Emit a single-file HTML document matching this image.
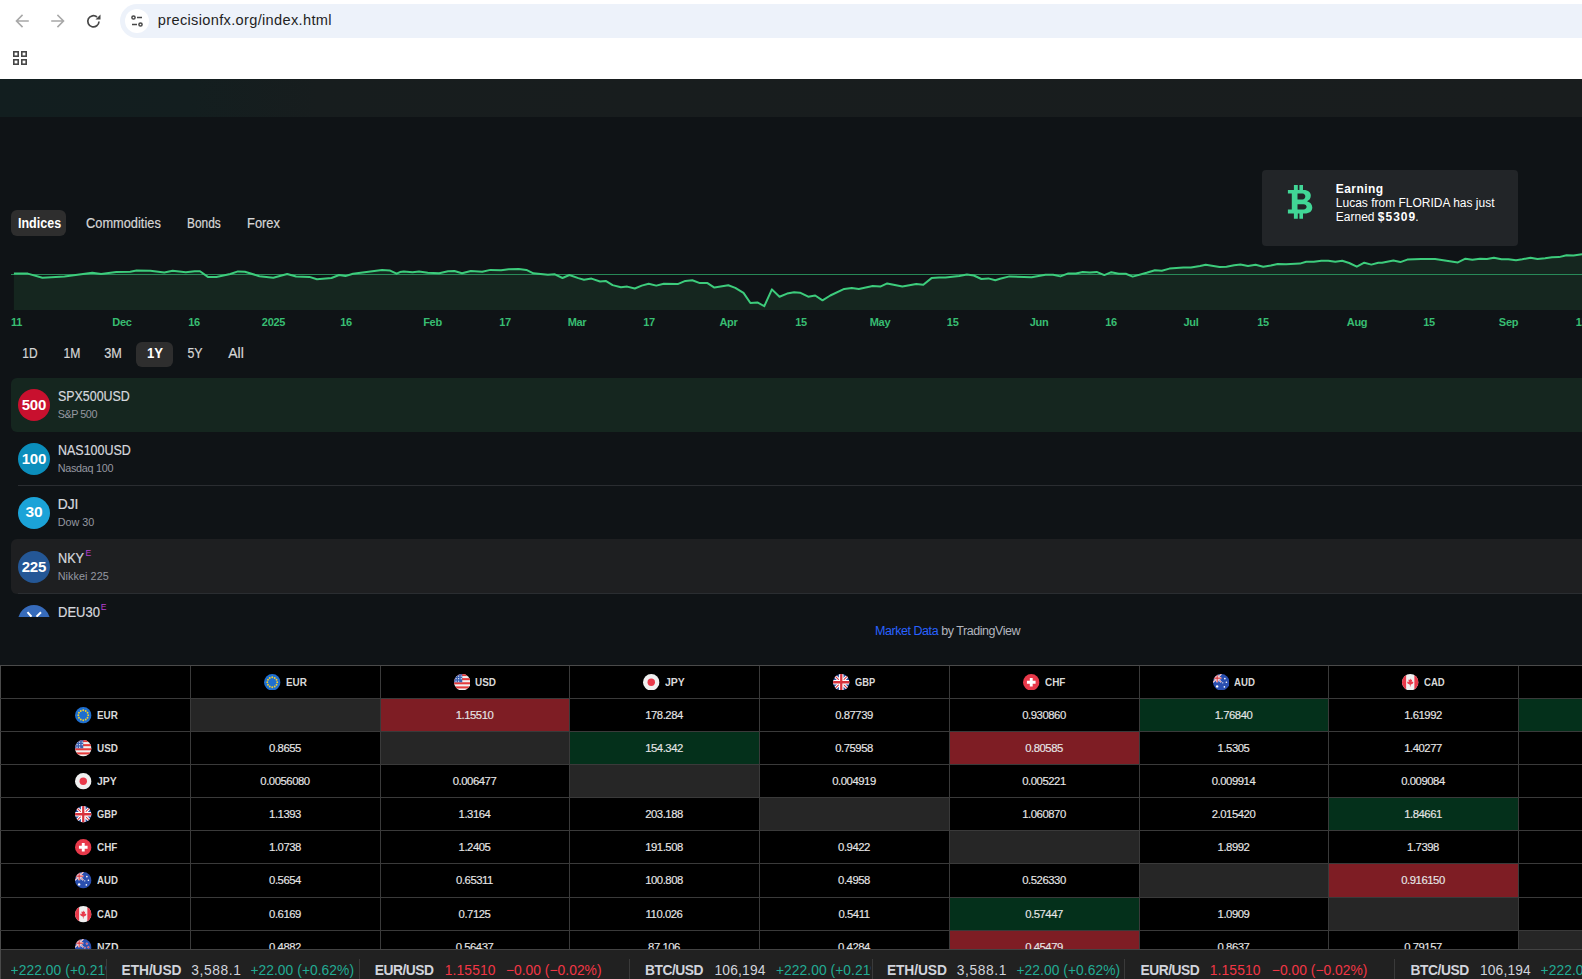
<!DOCTYPE html>
<html><head><meta charset="utf-8">
<style>
*{box-sizing:border-box;margin:0;padding:0}
html,body{width:1582px;height:979px;overflow:hidden;background:#0f1316;font-family:"Liberation Sans",sans-serif}
.abs{position:absolute}
#chrome{position:absolute;left:0;top:0;width:1582px;height:79px;background:#fff;overflow:hidden}
#page{position:absolute;left:0;top:79px;width:1582px;height:900px;background:#0f1316;overflow:hidden}
.t{position:absolute;white-space:pre;line-height:1}
</style></head><body>
<div id="chrome">
  <svg class="abs" style="left:0;top:0" width="120" height="79" viewBox="0 0 120 79">
    <g fill="none" stroke="#a8a8a8" stroke-width="1.6" stroke-linecap="square">
      <path d="M28 21H17M22 15.5L16.5 21L22 26.5"/>
      <path d="M52 21H63M58 15.5L63.5 21L58 26.5"/>
    </g>
    <g fill="none" stroke="#474747" stroke-width="1.7">
      <path d="M99 21.5A5.6 5.6 0 1 1 97 17"/>
    </g>
    <path d="M100.5 14.5V19.5H95.5Z" fill="#474747"/>
    <g fill="none" stroke="#474747" stroke-width="1.6">
      <rect x="13.8" y="51.8" width="4.4" height="4.4"/>
      <rect x="21.8" y="51.8" width="4.4" height="4.4"/>
      <rect x="13.8" y="59.8" width="4.4" height="4.4"/>
      <rect x="21.8" y="59.8" width="4.4" height="4.4"/>
    </g>
  </svg>
  <div class="abs" style="left:120px;top:4px;width:1500px;height:34px;border-radius:17px;background:#edf2fa"></div>
  <div class="abs" style="left:125px;top:9px;width:24px;height:24px;border-radius:12px;background:#fff"></div>
  <svg class="abs" style="left:125px;top:9px" width="24" height="24" viewBox="0 0 24 24">
    <g fill="none" stroke="#474747" stroke-width="1.5">
      <circle cx="8.5" cy="8.5" r="1.6"/><path d="M12 8.5H17"/>
      <circle cx="15.5" cy="15.5" r="1.6"/><path d="M7 15.5H12"/>
    </g>
  </svg>
  <div class="t" style="left:157.8px;top:13.1px;font-size:14.6px;letter-spacing:0.33px;color:#1f1f1f">precisionfx.org/index.html</div>
</div>
<div id="page">
<div class="abs" style="left:0;top:0;width:1582px;height:38px;background:linear-gradient(90deg,#121e1f 0%,#131e1f 12%,#171d1e 20%,#181d1e 40%,#191d1e 100%)"></div>
<div class="abs" style="left:11px;top:131px;width:55px;height:26px;border-radius:6px;background:#2e2e2e"></div>
<div class="t" style="left:17.7px;top:137.7px;font-size:13.8px;font-weight:700;color:#fff;letter-spacing:0px;transform:scaleX(0.907);transform-origin:0 0;">Indices</div>
<div class="t" style="left:85.6px;top:137.7px;font-size:13.8px;font-weight:400;color:#d6d6d6;letter-spacing:0px;transform:scaleX(0.929);transform-origin:0 0;-webkit-text-stroke:0.2px #d6d6d6">Commodities</div>
<div class="t" style="left:186.6px;top:137.7px;font-size:13.8px;font-weight:400;color:#d6d6d6;letter-spacing:0px;transform:scaleX(0.863);transform-origin:0 0;-webkit-text-stroke:0.2px #d6d6d6">Bonds</div>
<div class="t" style="left:246.7px;top:137.7px;font-size:13.8px;font-weight:400;color:#d6d6d6;letter-spacing:0px;transform:scaleX(0.935);transform-origin:0 0;-webkit-text-stroke:0.2px #d6d6d6">Forex</div>
<div class="abs" style="left:1262px;top:91px;width:256px;height:76px;border-radius:4px;background:#222528"></div>
<svg class="abs" style="left:1280px;top:101px" width="40" height="45" viewBox="1280 180 40 45"><path fill="#41d696" fill-rule="evenodd" d="M1287.9 190L1303.5 190C1308.5 190 1310.8 192.5 1310.8 195.8C1310.8 198.5 1309.3 200.3 1307 201.2C1310.3 202 1312.3 204.5 1312.3 207.5C1312.3 211.2 1309.5 213.5 1304.5 213.5L1287.9 213.5L1287.9 209.4L1291.8 209.4L1291.8 193.4L1287.9 193.4Z M1297.5 193.6H1302.5C1304.3 193.6 1305.3 195 1305.3 196.5C1305.3 198 1304.3 199.4 1302.5 199.4H1297.5Z M1297.5 204.2H1303.5C1305.6 204.2 1306.6 205.5 1306.6 206.8C1306.6 208.1 1305.6 209.4 1303.5 209.4H1297.5Z"/><path fill="#41d696" d="M1293.9 185H1297.8V191H1293.9Z M1299.4 185H1303V191H1299.4Z M1293.9 212.5H1297.8V218.8H1293.9Z M1299.4 212.5H1303V218.8H1299.4Z"/></svg>
<div class="t" style="left:1335.8px;top:103.6px;font-size:12px;font-weight:700;color:#fff;letter-spacing:0.45px;">Earning</div>
<div class="t" style="left:1335.8px;top:117.9px;font-size:12px;font-weight:400;color:#fff;letter-spacing:0px;">Lucas from FLORIDA has just</div>
<div class="t" style="left:1335.8px;top:131.9px;font-size:12px;font-weight:400;color:#fff;letter-spacing:0px;">Earned <b style='letter-spacing:1px'>$530</b><b>9</b>.</div>
<svg class="abs" style="left:0;top:166px" width="1582" height="70" viewBox="0 245 1582 70">
<path d="M13.9 273.6 L27.8 273.6 L42.4 277.8 L64.5 276.5 L92.3 272.7 L101.1 274.0 L116.3 272.1 L130.2 271.7 L136.5 270.6 L150.4 270.8 L164.3 272.4 L172.6 270.8 L185.8 272.3 L194.7 271.2 L200.0 271.2 L208.2 277.1 L216.4 277.1 L230.3 274.0 L237.9 271.4 L244.9 271.8 L259.4 276.2 L273.3 277.8 L287.2 274.0 L296.1 276.5 L309.4 276.9 L317.0 279.3 L331.5 278.0 L339.1 275.0 L345.4 276.1 L353.0 273.7 L382.0 269.9 L389.6 270.4 L396.6 273.7 L400.0 272.1 L403.8 271.4 L412.6 272.3 L419.0 271.4 L427.8 272.7 L439.2 273.3 L448.0 271.2 L454.4 271.0 L462.0 273.3 L470.8 271.0 L482.2 271.8 L490.4 269.9 L501.1 270.2 L508.7 269.3 L518.8 268.9 L526.4 269.9 L533.4 273.3 L547.9 274.8 L554.9 274.3 L562.5 278.0 L569.4 275.0 L578.3 278.1 L584.0 279.7 L591.5 278.6 L600.0 281.5 L605.7 280.9 L612.6 285.1 L620.9 287.2 L627.2 286.6 L634.8 288.5 L641.7 285.6 L648.7 283.7 L656.3 285.6 L663.8 283.7 L677.7 284.1 L685.3 280.9 L692.3 280.3 L699.9 283.1 L707.5 283.1 L714.4 287.6 L728.3 285.3 L735.3 287.9 L743.5 292.9 L750.4 303.0 L757.4 302.4 L764.3 306.2 L771.9 289.4 L779.5 296.7 L787.1 293.6 L794.1 292.3 L800.0 292.7 L808.2 296.7 L815.2 295.5 L822.5 300.3 L830.3 295.5 L844.2 288.9 L851.8 288.1 L858.8 288.9 L872.7 286.0 L880.3 286.6 L887.2 283.4 L902.4 286.6 L916.3 284.1 L923.3 284.7 L931.5 278.1 L939.1 277.4 L945.4 277.5 L959.3 275.9 L966.9 274.6 L973.8 275.5 L981.4 279.0 L988.4 278.4 L995.3 280.3 L1000.0 278.7 L1009.5 276.4 L1031.6 277.2 L1045.5 274.7 L1053.1 274.7 L1060.4 276.4 L1068.3 273.4 L1075.9 273.4 L1082.8 271.9 L1089.8 272.6 L1096.7 271.9 L1104.3 275.1 L1111.3 272.2 L1118.8 273.8 L1125.8 273.8 L1132.7 276.6 L1146.6 272.8 L1154.9 270.3 L1161.8 270.7 L1169.4 268.6 L1183.3 267.4 L1190.9 267.5 L1200.0 266.0 L1205.7 264.8 L1219.6 267.1 L1226.5 266.7 L1234.1 265.2 L1240.5 264.6 L1248.0 265.9 L1255.6 264.8 L1263.2 266.7 L1270.8 265.5 L1277.7 264.0 L1286.0 264.2 L1299.9 263.6 L1306.2 261.7 L1313.8 261.8 L1321.4 260.8 L1328.3 260.8 L1335.3 261.8 L1342.2 260.8 L1349.2 263.0 L1356.8 266.7 L1364.3 262.7 L1371.3 264.6 L1378.3 262.7 L1382.0 262.8 L1393.4 260.6 L1400.3 262.1 L1407.3 259.6 L1421.2 259.0 L1435.1 259.0 L1457.9 262.4 L1465.4 258.7 L1472.4 259.8 L1480.0 258.7 L1486.9 259.0 L1493.9 257.7 L1501.5 259.3 L1508.4 259.2 L1516.0 260.2 L1522.3 259.3 L1530.5 257.7 L1537.5 259.0 L1545.1 258.3 L1552.0 257.3 L1559.0 257.1 L1566.6 255.2 L1573.5 255.4 L1582.0 254.3 L1582 310 L13.9 310 Z" fill="#15261f"/>
<path d="M11 274.5H1582" stroke="#2c9c62" stroke-width="1" opacity="0.85"/>
<path d="M13.9 273.6 L27.8 273.6 L42.4 277.8 L64.5 276.5 L92.3 272.7 L101.1 274.0 L116.3 272.1 L130.2 271.7 L136.5 270.6 L150.4 270.8 L164.3 272.4 L172.6 270.8 L185.8 272.3 L194.7 271.2 L200.0 271.2 L208.2 277.1 L216.4 277.1 L230.3 274.0 L237.9 271.4 L244.9 271.8 L259.4 276.2 L273.3 277.8 L287.2 274.0 L296.1 276.5 L309.4 276.9 L317.0 279.3 L331.5 278.0 L339.1 275.0 L345.4 276.1 L353.0 273.7 L382.0 269.9 L389.6 270.4 L396.6 273.7 L400.0 272.1 L403.8 271.4 L412.6 272.3 L419.0 271.4 L427.8 272.7 L439.2 273.3 L448.0 271.2 L454.4 271.0 L462.0 273.3 L470.8 271.0 L482.2 271.8 L490.4 269.9 L501.1 270.2 L508.7 269.3 L518.8 268.9 L526.4 269.9 L533.4 273.3 L547.9 274.8 L554.9 274.3 L562.5 278.0 L569.4 275.0 L578.3 278.1 L584.0 279.7 L591.5 278.6 L600.0 281.5 L605.7 280.9 L612.6 285.1 L620.9 287.2 L627.2 286.6 L634.8 288.5 L641.7 285.6 L648.7 283.7 L656.3 285.6 L663.8 283.7 L677.7 284.1 L685.3 280.9 L692.3 280.3 L699.9 283.1 L707.5 283.1 L714.4 287.6 L728.3 285.3 L735.3 287.9 L743.5 292.9 L750.4 303.0 L757.4 302.4 L764.3 306.2 L771.9 289.4 L779.5 296.7 L787.1 293.6 L794.1 292.3 L800.0 292.7 L808.2 296.7 L815.2 295.5 L822.5 300.3 L830.3 295.5 L844.2 288.9 L851.8 288.1 L858.8 288.9 L872.7 286.0 L880.3 286.6 L887.2 283.4 L902.4 286.6 L916.3 284.1 L923.3 284.7 L931.5 278.1 L939.1 277.4 L945.4 277.5 L959.3 275.9 L966.9 274.6 L973.8 275.5 L981.4 279.0 L988.4 278.4 L995.3 280.3 L1000.0 278.7 L1009.5 276.4 L1031.6 277.2 L1045.5 274.7 L1053.1 274.7 L1060.4 276.4 L1068.3 273.4 L1075.9 273.4 L1082.8 271.9 L1089.8 272.6 L1096.7 271.9 L1104.3 275.1 L1111.3 272.2 L1118.8 273.8 L1125.8 273.8 L1132.7 276.6 L1146.6 272.8 L1154.9 270.3 L1161.8 270.7 L1169.4 268.6 L1183.3 267.4 L1190.9 267.5 L1200.0 266.0 L1205.7 264.8 L1219.6 267.1 L1226.5 266.7 L1234.1 265.2 L1240.5 264.6 L1248.0 265.9 L1255.6 264.8 L1263.2 266.7 L1270.8 265.5 L1277.7 264.0 L1286.0 264.2 L1299.9 263.6 L1306.2 261.7 L1313.8 261.8 L1321.4 260.8 L1328.3 260.8 L1335.3 261.8 L1342.2 260.8 L1349.2 263.0 L1356.8 266.7 L1364.3 262.7 L1371.3 264.6 L1378.3 262.7 L1382.0 262.8 L1393.4 260.6 L1400.3 262.1 L1407.3 259.6 L1421.2 259.0 L1435.1 259.0 L1457.9 262.4 L1465.4 258.7 L1472.4 259.8 L1480.0 258.7 L1486.9 259.0 L1493.9 257.7 L1501.5 259.3 L1508.4 259.2 L1516.0 260.2 L1522.3 259.3 L1530.5 257.7 L1537.5 259.0 L1545.1 258.3 L1552.0 257.3 L1559.0 257.1 L1566.6 255.2 L1573.5 255.4 L1582.0 254.3" fill="none" stroke="#3dcc7c" stroke-width="2" stroke-linejoin="round"/>
</svg>
<div class="t" style="left:-23.5px;width:80px;text-align:center;top:237.8px;font-size:11px;font-weight:700;color:#38bd72;letter-spacing:-0.3px;">11</div>
<div class="t" style="left:82.0px;width:80px;text-align:center;top:237.8px;font-size:11px;font-weight:700;color:#38bd72;letter-spacing:-0.3px;">Dec</div>
<div class="t" style="left:154.0px;width:80px;text-align:center;top:237.8px;font-size:11px;font-weight:700;color:#38bd72;letter-spacing:-0.3px;">16</div>
<div class="t" style="left:233.5px;width:80px;text-align:center;top:237.8px;font-size:11px;font-weight:700;color:#38bd72;letter-spacing:-0.3px;">2025</div>
<div class="t" style="left:306.0px;width:80px;text-align:center;top:237.8px;font-size:11px;font-weight:700;color:#38bd72;letter-spacing:-0.3px;">16</div>
<div class="t" style="left:392.5px;width:80px;text-align:center;top:237.8px;font-size:11px;font-weight:700;color:#38bd72;letter-spacing:-0.3px;">Feb</div>
<div class="t" style="left:465.0px;width:80px;text-align:center;top:237.8px;font-size:11px;font-weight:700;color:#38bd72;letter-spacing:-0.3px;">17</div>
<div class="t" style="left:537.0px;width:80px;text-align:center;top:237.8px;font-size:11px;font-weight:700;color:#38bd72;letter-spacing:-0.3px;">Mar</div>
<div class="t" style="left:609.0px;width:80px;text-align:center;top:237.8px;font-size:11px;font-weight:700;color:#38bd72;letter-spacing:-0.3px;">17</div>
<div class="t" style="left:688.5px;width:80px;text-align:center;top:237.8px;font-size:11px;font-weight:700;color:#38bd72;letter-spacing:-0.3px;">Apr</div>
<div class="t" style="left:761.0px;width:80px;text-align:center;top:237.8px;font-size:11px;font-weight:700;color:#38bd72;letter-spacing:-0.3px;">15</div>
<div class="t" style="left:840.0px;width:80px;text-align:center;top:237.8px;font-size:11px;font-weight:700;color:#38bd72;letter-spacing:-0.3px;">May</div>
<div class="t" style="left:912.7px;width:80px;text-align:center;top:237.8px;font-size:11px;font-weight:700;color:#38bd72;letter-spacing:-0.3px;">15</div>
<div class="t" style="left:999.0px;width:80px;text-align:center;top:237.8px;font-size:11px;font-weight:700;color:#38bd72;letter-spacing:-0.3px;">Jun</div>
<div class="t" style="left:1071.0px;width:80px;text-align:center;top:237.8px;font-size:11px;font-weight:700;color:#38bd72;letter-spacing:-0.3px;">16</div>
<div class="t" style="left:1151.0px;width:80px;text-align:center;top:237.8px;font-size:11px;font-weight:700;color:#38bd72;letter-spacing:-0.3px;">Jul</div>
<div class="t" style="left:1223.0px;width:80px;text-align:center;top:237.8px;font-size:11px;font-weight:700;color:#38bd72;letter-spacing:-0.3px;">15</div>
<div class="t" style="left:1317.0px;width:80px;text-align:center;top:237.8px;font-size:11px;font-weight:700;color:#38bd72;letter-spacing:-0.3px;">Aug</div>
<div class="t" style="left:1389.0px;width:80px;text-align:center;top:237.8px;font-size:11px;font-weight:700;color:#38bd72;letter-spacing:-0.3px;">15</div>
<div class="t" style="left:1468.5px;width:80px;text-align:center;top:237.8px;font-size:11px;font-weight:700;color:#38bd72;letter-spacing:-0.3px;">Sep</div>
<div class="t" style="left:1541.5px;width:80px;text-align:center;top:237.8px;font-size:11px;font-weight:700;color:#38bd72;letter-spacing:-0.3px;">15</div>
<div class="abs" style="left:136px;top:263px;width:37px;height:25px;border-radius:6px;background:#2e2e2e"></div>
<div class="t" style="left:-0.1px;width:60px;text-align:center;top:267.2px;font-size:14.2px;font-weight:400;color:#d6d6d6;letter-spacing:0px;transform:scaleX(0.841);transform-origin:50% 0;-webkit-text-stroke:0.2px #d6d6d6">1D</div>
<div class="t" style="left:41.5px;width:60px;text-align:center;top:267.2px;font-size:14.2px;font-weight:400;color:#d6d6d6;letter-spacing:0px;transform:scaleX(0.856);transform-origin:50% 0;-webkit-text-stroke:0.2px #d6d6d6">1M</div>
<div class="t" style="left:83.2px;width:60px;text-align:center;top:267.2px;font-size:14.2px;font-weight:400;color:#d6d6d6;letter-spacing:0px;transform:scaleX(0.894);transform-origin:50% 0;-webkit-text-stroke:0.2px #d6d6d6">3M</div>
<div class="t" style="left:124.8px;width:60px;text-align:center;top:267.2px;font-size:14.2px;font-weight:700;color:#fff;letter-spacing:0px;transform:scaleX(0.925);transform-origin:50% 0;">1Y</div>
<div class="t" style="left:164.8px;width:60px;text-align:center;top:267.2px;font-size:14.2px;font-weight:400;color:#d6d6d6;letter-spacing:0px;transform:scaleX(0.875);transform-origin:50% 0;-webkit-text-stroke:0.2px #d6d6d6">5Y</div>
<div class="t" style="left:205.5px;width:60px;text-align:center;top:267.2px;font-size:14.2px;font-weight:400;color:#d6d6d6;letter-spacing:0px;transform:scaleX(0.987);transform-origin:50% 0;-webkit-text-stroke:0.2px #d6d6d6">All</div>
<div class="abs" style="left:0;top:299px;width:1582px;height:239px;overflow:hidden"><div class="abs" style="left:11px;top:0;width:1600px;height:54px;border-radius:6px;background:#15261f"></div><div class="abs" style="left:18px;top:107px;width:1600px;height:1px;background:#2a2d31"></div><div class="abs" style="left:18px;top:161px;width:130px;height:1px;background:#2a2d31"></div><div class="abs" style="left:11px;top:161px;width:1600px;height:54.5px;border-radius:6px;background:#1e1f21"></div><div class="abs" style="left:18px;top:215px;width:1600px;height:1px;background:#2a2d31"></div><div class="abs" style="left:18px;top:11px;width:32px;height:32px;border-radius:16px;background:#c8102e"></div><div class="t" style="left:18px;width:32px;text-align:center;top:18.6px;font-size:15px;font-weight:700;color:#fff;letter-spacing:-0.1px">500</div><div class="t" style="left:57.7px;top:12.4px;font-size:13.8px;color:#d6d8de;transform:scaleX(0.9);transform-origin:0 0;-webkit-text-stroke:0.2px #d6d8de">SPX500USD</div><div class="t" style="left:57.7px;top:30.9px;font-size:10.8px;color:#9598a1;letter-spacing:-0.45px">S&amp;P 500</div><div class="abs" style="left:18px;top:65px;width:32px;height:32px;border-radius:16px;background:#0b8ebc"></div><div class="t" style="left:18px;width:32px;text-align:center;top:72.5px;font-size:15px;font-weight:700;color:#fff;letter-spacing:-0.1px">100</div><div class="t" style="left:57.7px;top:66.4px;font-size:13.8px;color:#d6d8de;transform:scaleX(0.904);transform-origin:0 0;-webkit-text-stroke:0.2px #d6d8de">NAS100USD</div><div class="t" style="left:57.7px;top:84.9px;font-size:10.8px;color:#9598a1;letter-spacing:-0.26px">Nasdaq 100</div><div class="abs" style="left:18px;top:119px;width:32px;height:32px;border-radius:16px;background:#1ba3d8"></div><div class="t" style="left:18px;width:32px;text-align:center;top:126.3px;font-size:15.5px;font-weight:700;color:#fff;letter-spacing:-0.1px">30</div><div class="t" style="left:57.7px;top:120.4px;font-size:13.8px;color:#d6d8de;transform:scaleX(1.0);transform-origin:0 0;-webkit-text-stroke:0.2px #d6d8de">DJI</div><div class="t" style="left:57.7px;top:138.9px;font-size:10.8px;color:#9598a1;letter-spacing:-0.02px">Dow 30</div><div class="abs" style="left:18px;top:173px;width:32px;height:32px;border-radius:16px;background:#245796"></div><div class="t" style="left:18px;width:32px;text-align:center;top:180.6px;font-size:15px;font-weight:700;color:#fff;letter-spacing:-0.1px">225</div><div class="t" style="left:57.7px;top:174.4px;font-size:13.8px;color:#d6d8de;transform:scaleX(0.919);transform-origin:0 0;-webkit-text-stroke:0.2px #d6d8de">NKY</div><div class="t" style="left:85.4px;top:170.6px;font-size:8.6px;color:#b540d0">E</div><div class="t" style="left:57.7px;top:192.9px;font-size:10.8px;color:#9598a1;letter-spacing:0.07px">Nikkei 225</div><div class="abs" style="left:18px;top:227px;width:32px;height:32px;border-radius:16px;background:#366bbb"></div><svg class="abs" style="left:18px;top:227px" width="32" height="32"><path d="M9.5 7.2L13.5 11.7M23 7.2L18.5 11.7" stroke="#fff" stroke-width="2" fill="none"/></svg><div class="t" style="left:57.7px;top:228.4px;font-size:13.8px;color:#d6d8de;transform:scaleX(0.942);transform-origin:0 0;-webkit-text-stroke:0.2px #d6d8de">DEU30</div><div class="t" style="left:100.7px;top:224.6px;font-size:8.6px;color:#b540d0">E</div></div>
<div class="t" style="left:875.0px;top:546.4px;font-size:12.5px;font-weight:400;color:#2962ff;letter-spacing:-0.45px;">Market Data<span style="color:#b2b5be"> by TradingView</span></div>
<svg width="0" height="0" style="position:absolute">
<defs>
<clipPath id="fc"><circle cx="8" cy="8" r="8"/></clipPath>
<symbol id="f-EUR" viewBox="0 0 16 16"><circle cx="8" cy="8" r="8" fill="#1f6fd0"/>
<g fill="#f5d02a">
<circle cx="8" cy="3.2" r="0.9"/><circle cx="10.4" cy="3.85" r="0.9"/><circle cx="12.15" cy="5.6" r="0.9"/><circle cx="12.8" cy="8" r="0.9"/><circle cx="12.15" cy="10.4" r="0.9"/><circle cx="10.4" cy="12.15" r="0.9"/><circle cx="8" cy="12.8" r="0.9"/><circle cx="5.6" cy="12.15" r="0.9"/><circle cx="3.85" cy="10.4" r="0.9"/><circle cx="3.2" cy="8" r="0.9"/><circle cx="3.85" cy="5.6" r="0.9"/><circle cx="5.6" cy="3.85" r="0.9"/>
</g></symbol>
<symbol id="f-USD" viewBox="0 0 16 16"><g clip-path="url(#fc)"><rect width="16" height="16" fill="#f0f0f0"/>
<rect y="0" width="16" height="2" fill="#e63a3a"/><rect y="4" width="16" height="2" fill="#e63a3a"/><rect y="8" width="16" height="2" fill="#e63a3a"/><rect y="12" width="16" height="2" fill="#e63a3a"/>
<rect width="8" height="8" fill="#3a5fb0"/>
<g fill="#fff"><circle cx="2" cy="2" r=".6"/><circle cx="4.5" cy="2" r=".6"/><circle cx="7" cy="2" r=".6"/><circle cx="2" cy="4.5" r=".6"/><circle cx="4.5" cy="4.5" r=".6"/><circle cx="7" cy="4.5" r=".6"/><circle cx="2" cy="7" r=".6"/><circle cx="4.5" cy="7" r=".6"/></g>
</g></symbol>
<symbol id="f-JPY" viewBox="0 0 16 16"><circle cx="8" cy="8" r="8" fill="#f0f0f0"/><circle cx="8" cy="8" r="3.6" fill="#e8394a"/></symbol>
<symbol id="f-GBP" viewBox="0 0 16 16"><g clip-path="url(#fc)"><rect width="16" height="16" fill="#2c4fa0"/>
<path d="M0 0L16 16M16 0L0 16" stroke="#fff" stroke-width="3"/>
<path d="M0 0L16 16M16 0L0 16" stroke="#d8323c" stroke-width="1"/>
<path d="M8 0V16M0 8H16" stroke="#fff" stroke-width="4.5"/>
<path d="M8 0V16M0 8H16" stroke="#d8323c" stroke-width="2.2"/>
</g></symbol>
<symbol id="f-CHF" viewBox="0 0 16 16"><circle cx="8" cy="8" r="8" fill="#e8394a"/><path d="M6.6 3.8H9.4V6.6H12.2V9.4H9.4V12.2H6.6V9.4H3.8V6.6H6.6Z" fill="#fff"/></symbol>
<symbol id="f-AUD" viewBox="0 0 16 16"><g clip-path="url(#fc)"><rect width="16" height="16" fill="#2a4fb0"/>
<g transform="scale(0.5)"><path d="M0 0L16 16M16 0L0 16" stroke="#fff" stroke-width="3"/><path d="M0 0L16 16M16 0L0 16" stroke="#d8323c" stroke-width="1"/><path d="M8 0V16M0 8H16" stroke="#fff" stroke-width="4.5"/><path d="M8 0V16M0 8H16" stroke="#d8323c" stroke-width="2.2"/></g>
<g fill="#fff"><circle cx="4" cy="12" r="1.2"/><circle cx="11.5" cy="4.5" r=".8"/><circle cx="13" cy="8" r=".8"/><circle cx="11" cy="12.5" r=".8"/><circle cx="9.5" cy="8.5" r=".6"/></g>
</g></symbol>
<symbol id="f-CAD" viewBox="0 0 16 16"><g clip-path="url(#fc)"><rect width="16" height="16" fill="#f0f0f0"/><rect width="4" height="16" fill="#e8394a"/><rect x="12" width="4" height="16" fill="#e8394a"/>
<path d="M8 4.3L8.7 5.8L9.8 5.4L9.4 8L10.6 7.2L11 8L10.6 9.2L8.3 10.4V12H7.7V10.4L5.4 9.2L5 8L5.4 7.2L6.6 8L6.2 5.4L7.3 5.8Z" fill="#e8394a"/></g></symbol>
<symbol id="f-NZD" viewBox="0 0 16 16"><g clip-path="url(#fc)"><rect width="16" height="16" fill="#2a4fb0"/>
<g transform="scale(0.5)"><path d="M0 0L16 16M16 0L0 16" stroke="#fff" stroke-width="3"/><path d="M0 0L16 16M16 0L0 16" stroke="#d8323c" stroke-width="1"/><path d="M8 0V16M0 8H16" stroke="#fff" stroke-width="4.5"/><path d="M8 0V16M0 8H16" stroke="#d8323c" stroke-width="2.2"/></g>
<g fill="#e8394a" stroke="#fff" stroke-width=".3"><circle cx="11.5" cy="4.5" r=".9"/><circle cx="13" cy="8" r=".9"/><circle cx="11" cy="12.5" r=".9"/><circle cx="9.5" cy="8.5" r=".8"/></g>
</g></symbol>
</defs></svg>
<div class="abs" style="left:0;top:586px;width:1582px;height:284px;overflow:hidden"><div class="abs" style="left:0;top:0;width:1582px;height:300px;background:#000"></div><div class="abs" style="left:191px;top:34px;width:189px;height:32px;background:#262626"></div><div class="abs" style="left:381px;top:34px;width:188px;height:32px;background:#7e1d24"></div><div class="abs" style="left:1140px;top:34px;width:188px;height:32px;background:#04301b"></div><div class="abs" style="left:1519px;top:34px;width:189px;height:32px;background:#04301b"></div><div class="abs" style="left:381px;top:67px;width:188px;height:32px;background:#262626"></div><div class="abs" style="left:570px;top:67px;width:189px;height:32px;background:#04301b"></div><div class="abs" style="left:950px;top:67px;width:189px;height:32px;background:#7e1d24"></div><div class="abs" style="left:570px;top:100px;width:189px;height:32px;background:#262626"></div><div class="abs" style="left:760px;top:133px;width:189px;height:32px;background:#262626"></div><div class="abs" style="left:1329px;top:133px;width:189px;height:32px;background:#04301b"></div><div class="abs" style="left:950px;top:166px;width:189px;height:32px;background:#262626"></div><div class="abs" style="left:1140px;top:199px;width:188px;height:33px;background:#262626"></div><div class="abs" style="left:1329px;top:199px;width:189px;height:33px;background:#7e1d24"></div><div class="abs" style="left:950px;top:233px;width:189px;height:32px;background:#04301b"></div><div class="abs" style="left:1329px;top:233px;width:189px;height:32px;background:#262626"></div><div class="abs" style="left:950px;top:266px;width:189px;height:32px;background:#7e1d24"></div><div class="abs" style="left:1519px;top:266px;width:189px;height:32px;background:#262626"></div><div class="abs" style="left:0px;top:0;width:1px;height:300px;background:#4a4a4a"></div><div class="abs" style="left:190px;top:0;width:1px;height:300px;background:#3a3a3a"></div><div class="abs" style="left:380px;top:0;width:1px;height:300px;background:#3a3a3a"></div><div class="abs" style="left:569px;top:0;width:1px;height:300px;background:#3a3a3a"></div><div class="abs" style="left:759px;top:0;width:1px;height:300px;background:#3a3a3a"></div><div class="abs" style="left:949px;top:0;width:1px;height:300px;background:#3a3a3a"></div><div class="abs" style="left:1139px;top:0;width:1px;height:300px;background:#3a3a3a"></div><div class="abs" style="left:1328px;top:0;width:1px;height:300px;background:#3a3a3a"></div><div class="abs" style="left:1518px;top:0;width:1px;height:300px;background:#3a3a3a"></div><div class="abs" style="left:1708px;top:0;width:1px;height:300px;background:#3a3a3a"></div><div class="abs" style="left:0;top:0px;width:1720px;height:1px;background:#4a4a4a"></div><div class="abs" style="left:0;top:33px;width:1720px;height:1px;background:#3a3a3a"></div><div class="abs" style="left:0;top:66px;width:1720px;height:1px;background:#3a3a3a"></div><div class="abs" style="left:0;top:99px;width:1720px;height:1px;background:#3a3a3a"></div><div class="abs" style="left:0;top:132px;width:1720px;height:1px;background:#3a3a3a"></div><div class="abs" style="left:0;top:165px;width:1720px;height:1px;background:#3a3a3a"></div><div class="abs" style="left:0;top:198px;width:1720px;height:1px;background:#3a3a3a"></div><div class="abs" style="left:0;top:232px;width:1720px;height:1px;background:#3a3a3a"></div><div class="abs" style="left:0;top:265px;width:1720px;height:1px;background:#3a3a3a"></div><div class="abs" style="left:0;top:298px;width:1720px;height:1px;background:#3a3a3a"></div><svg class="abs" style="left:264.1px;top:8.6px" width="16.5" height="16.5"><use href="#f-EUR"/></svg><div class="t" style="left:285.6px;top:11.9px;font-size:11.3px;font-weight:700;color:#d9d9d9;transform:scaleX(0.878);transform-origin:0 0">EUR</div><svg class="abs" style="left:453.6px;top:8.6px" width="16.5" height="16.5"><use href="#f-USD"/></svg><div class="t" style="left:475.1px;top:11.9px;font-size:11.3px;font-weight:700;color:#d9d9d9;transform:scaleX(0.878);transform-origin:0 0">USD</div><svg class="abs" style="left:643.1px;top:8.6px" width="16.5" height="16.5"><use href="#f-JPY"/></svg><div class="t" style="left:664.6px;top:11.9px;font-size:11.3px;font-weight:700;color:#d9d9d9;transform:scaleX(0.929);transform-origin:0 0">JPY</div><svg class="abs" style="left:833.1px;top:8.6px" width="16.5" height="16.5"><use href="#f-GBP"/></svg><div class="t" style="left:854.6px;top:11.9px;font-size:11.3px;font-weight:700;color:#d9d9d9;transform:scaleX(0.821);transform-origin:0 0">GBP</div><svg class="abs" style="left:1023.1px;top:8.6px" width="16.5" height="16.5"><use href="#f-CHF"/></svg><div class="t" style="left:1044.7px;top:11.9px;font-size:11.3px;font-weight:700;color:#d9d9d9;transform:scaleX(0.878);transform-origin:0 0">CHF</div><svg class="abs" style="left:1212.7px;top:8.6px" width="16.5" height="16.5"><use href="#f-AUD"/></svg><div class="t" style="left:1234.2px;top:11.9px;font-size:11.3px;font-weight:700;color:#d9d9d9;transform:scaleX(0.854);transform-origin:0 0">AUD</div><svg class="abs" style="left:1402.2px;top:8.6px" width="16.5" height="16.5"><use href="#f-CAD"/></svg><div class="t" style="left:1423.7px;top:11.9px;font-size:11.3px;font-weight:700;color:#d9d9d9;transform:scaleX(0.846);transform-origin:0 0">CAD</div><svg class="abs" style="left:1592.2px;top:8.6px" width="16.5" height="16.5"><use href="#f-NZD"/></svg><div class="t" style="left:1613.7px;top:11.9px;font-size:11.3px;font-weight:700;color:#d9d9d9;transform:scaleX(0.923);transform-origin:0 0">NZD</div><svg class="abs" style="left:75.2px;top:42.1px" width="16.5" height="16.5"><use href="#f-EUR"/></svg><div class="t" style="left:96.7px;top:44.6px;font-size:11.3px;font-weight:700;color:#d9d9d9;transform:scaleX(0.878);transform-origin:0 0">EUR</div><div class="t" style="left:394.5px;width:160px;text-align:center;top:44.6px;font-size:11.3px;color:#e6e6e6;letter-spacing:-0.45px;-webkit-text-stroke:0.15px #e6e6e6">1.15510</div><div class="t" style="left:584.0px;width:160px;text-align:center;top:44.6px;font-size:11.3px;color:#e6e6e6;letter-spacing:-0.45px;-webkit-text-stroke:0.15px #e6e6e6">178.284</div><div class="t" style="left:774.0px;width:160px;text-align:center;top:44.6px;font-size:11.3px;color:#e6e6e6;letter-spacing:-0.45px;-webkit-text-stroke:0.15px #e6e6e6">0.87739</div><div class="t" style="left:964.0px;width:160px;text-align:center;top:44.6px;font-size:11.3px;color:#e6e6e6;letter-spacing:-0.45px;-webkit-text-stroke:0.15px #e6e6e6">0.930860</div><div class="t" style="left:1153.5px;width:160px;text-align:center;top:44.6px;font-size:11.3px;color:#e6e6e6;letter-spacing:-0.45px;-webkit-text-stroke:0.15px #e6e6e6">1.76840</div><div class="t" style="left:1343.0px;width:160px;text-align:center;top:44.6px;font-size:11.3px;color:#e6e6e6;letter-spacing:-0.45px;-webkit-text-stroke:0.15px #e6e6e6">1.61992</div><svg class="abs" style="left:75.2px;top:75.1px" width="16.5" height="16.5"><use href="#f-USD"/></svg><div class="t" style="left:96.7px;top:77.6px;font-size:11.3px;font-weight:700;color:#d9d9d9;transform:scaleX(0.878);transform-origin:0 0">USD</div><div class="t" style="left:205.0px;width:160px;text-align:center;top:77.6px;font-size:11.3px;color:#e6e6e6;letter-spacing:-0.45px;-webkit-text-stroke:0.15px #e6e6e6">0.8655</div><div class="t" style="left:584.0px;width:160px;text-align:center;top:77.6px;font-size:11.3px;color:#e6e6e6;letter-spacing:-0.45px;-webkit-text-stroke:0.15px #e6e6e6">154.342</div><div class="t" style="left:774.0px;width:160px;text-align:center;top:77.6px;font-size:11.3px;color:#e6e6e6;letter-spacing:-0.45px;-webkit-text-stroke:0.15px #e6e6e6">0.75958</div><div class="t" style="left:964.0px;width:160px;text-align:center;top:77.6px;font-size:11.3px;color:#e6e6e6;letter-spacing:-0.45px;-webkit-text-stroke:0.15px #e6e6e6">0.80585</div><div class="t" style="left:1153.5px;width:160px;text-align:center;top:77.6px;font-size:11.3px;color:#e6e6e6;letter-spacing:-0.45px;-webkit-text-stroke:0.15px #e6e6e6">1.5305</div><div class="t" style="left:1343.0px;width:160px;text-align:center;top:77.6px;font-size:11.3px;color:#e6e6e6;letter-spacing:-0.45px;-webkit-text-stroke:0.15px #e6e6e6">1.40277</div><svg class="abs" style="left:75.2px;top:108.1px" width="16.5" height="16.5"><use href="#f-JPY"/></svg><div class="t" style="left:96.7px;top:110.6px;font-size:11.3px;font-weight:700;color:#d9d9d9;transform:scaleX(0.929);transform-origin:0 0">JPY</div><div class="t" style="left:205.0px;width:160px;text-align:center;top:110.6px;font-size:11.3px;color:#e6e6e6;letter-spacing:-0.45px;-webkit-text-stroke:0.15px #e6e6e6">0.0056080</div><div class="t" style="left:394.5px;width:160px;text-align:center;top:110.6px;font-size:11.3px;color:#e6e6e6;letter-spacing:-0.45px;-webkit-text-stroke:0.15px #e6e6e6">0.006477</div><div class="t" style="left:774.0px;width:160px;text-align:center;top:110.6px;font-size:11.3px;color:#e6e6e6;letter-spacing:-0.45px;-webkit-text-stroke:0.15px #e6e6e6">0.004919</div><div class="t" style="left:964.0px;width:160px;text-align:center;top:110.6px;font-size:11.3px;color:#e6e6e6;letter-spacing:-0.45px;-webkit-text-stroke:0.15px #e6e6e6">0.005221</div><div class="t" style="left:1153.5px;width:160px;text-align:center;top:110.6px;font-size:11.3px;color:#e6e6e6;letter-spacing:-0.45px;-webkit-text-stroke:0.15px #e6e6e6">0.009914</div><div class="t" style="left:1343.0px;width:160px;text-align:center;top:110.6px;font-size:11.3px;color:#e6e6e6;letter-spacing:-0.45px;-webkit-text-stroke:0.15px #e6e6e6">0.009084</div><svg class="abs" style="left:75.2px;top:141.1px" width="16.5" height="16.5"><use href="#f-GBP"/></svg><div class="t" style="left:96.7px;top:143.6px;font-size:11.3px;font-weight:700;color:#d9d9d9;transform:scaleX(0.821);transform-origin:0 0">GBP</div><div class="t" style="left:205.0px;width:160px;text-align:center;top:143.6px;font-size:11.3px;color:#e6e6e6;letter-spacing:-0.45px;-webkit-text-stroke:0.15px #e6e6e6">1.1393</div><div class="t" style="left:394.5px;width:160px;text-align:center;top:143.6px;font-size:11.3px;color:#e6e6e6;letter-spacing:-0.45px;-webkit-text-stroke:0.15px #e6e6e6">1.3164</div><div class="t" style="left:584.0px;width:160px;text-align:center;top:143.6px;font-size:11.3px;color:#e6e6e6;letter-spacing:-0.45px;-webkit-text-stroke:0.15px #e6e6e6">203.188</div><div class="t" style="left:964.0px;width:160px;text-align:center;top:143.6px;font-size:11.3px;color:#e6e6e6;letter-spacing:-0.45px;-webkit-text-stroke:0.15px #e6e6e6">1.060870</div><div class="t" style="left:1153.5px;width:160px;text-align:center;top:143.6px;font-size:11.3px;color:#e6e6e6;letter-spacing:-0.45px;-webkit-text-stroke:0.15px #e6e6e6">2.015420</div><div class="t" style="left:1343.0px;width:160px;text-align:center;top:143.6px;font-size:11.3px;color:#e6e6e6;letter-spacing:-0.45px;-webkit-text-stroke:0.15px #e6e6e6">1.84661</div><svg class="abs" style="left:75.2px;top:174.1px" width="16.5" height="16.5"><use href="#f-CHF"/></svg><div class="t" style="left:96.7px;top:176.6px;font-size:11.3px;font-weight:700;color:#d9d9d9;transform:scaleX(0.878);transform-origin:0 0">CHF</div><div class="t" style="left:205.0px;width:160px;text-align:center;top:176.6px;font-size:11.3px;color:#e6e6e6;letter-spacing:-0.45px;-webkit-text-stroke:0.15px #e6e6e6">1.0738</div><div class="t" style="left:394.5px;width:160px;text-align:center;top:176.6px;font-size:11.3px;color:#e6e6e6;letter-spacing:-0.45px;-webkit-text-stroke:0.15px #e6e6e6">1.2405</div><div class="t" style="left:584.0px;width:160px;text-align:center;top:176.6px;font-size:11.3px;color:#e6e6e6;letter-spacing:-0.45px;-webkit-text-stroke:0.15px #e6e6e6">191.508</div><div class="t" style="left:774.0px;width:160px;text-align:center;top:176.6px;font-size:11.3px;color:#e6e6e6;letter-spacing:-0.45px;-webkit-text-stroke:0.15px #e6e6e6">0.9422</div><div class="t" style="left:1153.5px;width:160px;text-align:center;top:176.6px;font-size:11.3px;color:#e6e6e6;letter-spacing:-0.45px;-webkit-text-stroke:0.15px #e6e6e6">1.8992</div><div class="t" style="left:1343.0px;width:160px;text-align:center;top:176.6px;font-size:11.3px;color:#e6e6e6;letter-spacing:-0.45px;-webkit-text-stroke:0.15px #e6e6e6">1.7398</div><svg class="abs" style="left:75.2px;top:207.1px" width="16.5" height="16.5"><use href="#f-AUD"/></svg><div class="t" style="left:96.7px;top:209.6px;font-size:11.3px;font-weight:700;color:#d9d9d9;transform:scaleX(0.854);transform-origin:0 0">AUD</div><div class="t" style="left:205.0px;width:160px;text-align:center;top:209.6px;font-size:11.3px;color:#e6e6e6;letter-spacing:-0.45px;-webkit-text-stroke:0.15px #e6e6e6">0.5654</div><div class="t" style="left:394.5px;width:160px;text-align:center;top:209.6px;font-size:11.3px;color:#e6e6e6;letter-spacing:-0.45px;-webkit-text-stroke:0.15px #e6e6e6">0.65311</div><div class="t" style="left:584.0px;width:160px;text-align:center;top:209.6px;font-size:11.3px;color:#e6e6e6;letter-spacing:-0.45px;-webkit-text-stroke:0.15px #e6e6e6">100.808</div><div class="t" style="left:774.0px;width:160px;text-align:center;top:209.6px;font-size:11.3px;color:#e6e6e6;letter-spacing:-0.45px;-webkit-text-stroke:0.15px #e6e6e6">0.4958</div><div class="t" style="left:964.0px;width:160px;text-align:center;top:209.6px;font-size:11.3px;color:#e6e6e6;letter-spacing:-0.45px;-webkit-text-stroke:0.15px #e6e6e6">0.526330</div><div class="t" style="left:1343.0px;width:160px;text-align:center;top:209.6px;font-size:11.3px;color:#e6e6e6;letter-spacing:-0.45px;-webkit-text-stroke:0.15px #e6e6e6">0.916150</div><svg class="abs" style="left:75.2px;top:241.1px" width="16.5" height="16.5"><use href="#f-CAD"/></svg><div class="t" style="left:96.7px;top:243.6px;font-size:11.3px;font-weight:700;color:#d9d9d9;transform:scaleX(0.846);transform-origin:0 0">CAD</div><div class="t" style="left:205.0px;width:160px;text-align:center;top:243.6px;font-size:11.3px;color:#e6e6e6;letter-spacing:-0.45px;-webkit-text-stroke:0.15px #e6e6e6">0.6169</div><div class="t" style="left:394.5px;width:160px;text-align:center;top:243.6px;font-size:11.3px;color:#e6e6e6;letter-spacing:-0.45px;-webkit-text-stroke:0.15px #e6e6e6">0.7125</div><div class="t" style="left:584.0px;width:160px;text-align:center;top:243.6px;font-size:11.3px;color:#e6e6e6;letter-spacing:-0.45px;-webkit-text-stroke:0.15px #e6e6e6">110.026</div><div class="t" style="left:774.0px;width:160px;text-align:center;top:243.6px;font-size:11.3px;color:#e6e6e6;letter-spacing:-0.45px;-webkit-text-stroke:0.15px #e6e6e6">0.5411</div><div class="t" style="left:964.0px;width:160px;text-align:center;top:243.6px;font-size:11.3px;color:#e6e6e6;letter-spacing:-0.45px;-webkit-text-stroke:0.15px #e6e6e6">0.57447</div><div class="t" style="left:1153.5px;width:160px;text-align:center;top:243.6px;font-size:11.3px;color:#e6e6e6;letter-spacing:-0.45px;-webkit-text-stroke:0.15px #e6e6e6">1.0909</div><svg class="abs" style="left:75.2px;top:274.1px" width="16.5" height="16.5"><use href="#f-NZD"/></svg><div class="t" style="left:96.7px;top:276.6px;font-size:11.3px;font-weight:700;color:#d9d9d9;transform:scaleX(0.923);transform-origin:0 0">NZD</div><div class="t" style="left:205.0px;width:160px;text-align:center;top:276.6px;font-size:11.3px;color:#e6e6e6;letter-spacing:-0.45px;-webkit-text-stroke:0.15px #e6e6e6">0.4882</div><div class="t" style="left:394.5px;width:160px;text-align:center;top:276.6px;font-size:11.3px;color:#e6e6e6;letter-spacing:-0.45px;-webkit-text-stroke:0.15px #e6e6e6">0.56437</div><div class="t" style="left:584.0px;width:160px;text-align:center;top:276.6px;font-size:11.3px;color:#e6e6e6;letter-spacing:-0.45px;-webkit-text-stroke:0.15px #e6e6e6">87.106</div><div class="t" style="left:774.0px;width:160px;text-align:center;top:276.6px;font-size:11.3px;color:#e6e6e6;letter-spacing:-0.45px;-webkit-text-stroke:0.15px #e6e6e6">0.4284</div><div class="t" style="left:964.0px;width:160px;text-align:center;top:276.6px;font-size:11.3px;color:#e6e6e6;letter-spacing:-0.45px;-webkit-text-stroke:0.15px #e6e6e6">0.45479</div><div class="t" style="left:1153.5px;width:160px;text-align:center;top:276.6px;font-size:11.3px;color:#e6e6e6;letter-spacing:-0.45px;-webkit-text-stroke:0.15px #e6e6e6">0.8637</div><div class="t" style="left:1343.0px;width:160px;text-align:center;top:276.6px;font-size:11.3px;color:#e6e6e6;letter-spacing:-0.45px;-webkit-text-stroke:0.15px #e6e6e6">0.79157</div></div>
<div class="abs" style="left:0;top:870px;width:1582px;height:30px;background:#212121;overflow:hidden"><div class="abs" style="left:0;top:0;width:1px;height:30px;background:#4a4a4a"></div><div class="abs" style="left:1px;top:0;width:1600px;height:1px;background:#434343"></div><div class="abs" style="left:10.6px;top:0;width:95.4px;height:30px;overflow:hidden"><div class="t" style="left:0;top:14.7px;font-size:13.8px;font-weight:400;color:#22ab94;letter-spacing:0.07px">+222.00 (+0.21%)</div></div><div class="t" style="left:121.6px;top:14.7px;font-size:13.8px;font-weight:700;color:#d1d4dc;letter-spacing:-0.1px">ETH/USD</div><div class="t" style="left:191.2px;top:14.7px;font-size:13.8px;font-weight:400;color:#d1d4dc;letter-spacing:0.62px">3,588.1</div><div class="t" style="left:250.4px;top:14.7px;font-size:13.8px;font-weight:400;color:#22ab94;letter-spacing:0.06px">+22.00 (+0.62%)</div><div class="t" style="left:374.7px;top:14.7px;font-size:13.8px;font-weight:700;color:#d1d4dc;letter-spacing:-0.47px">EUR/USD</div><div class="t" style="left:444.8px;top:14.7px;font-size:13.8px;font-weight:400;color:#f23645;letter-spacing:0.12px">1.15510</div><div class="t" style="left:505.9px;top:14.7px;font-size:13.8px;font-weight:400;color:#f23645;letter-spacing:0.04px">&minus;0.00 (&minus;0.02%)</div><div class="t" style="left:644.9px;top:14.7px;font-size:13.8px;font-weight:700;color:#d1d4dc;letter-spacing:-0.45px">BTC/USD</div><div class="t" style="left:714.5px;top:14.7px;font-size:13.8px;font-weight:400;color:#d1d4dc;letter-spacing:0.17px">106,194</div><div class="abs" style="left:775.9px;top:0;width:95.1px;height:30px;overflow:hidden"><div class="t" style="left:0;top:14.7px;font-size:13.8px;font-weight:400;color:#22ab94;letter-spacing:0.07px">+222.00 (+0.21%)</div></div><div class="t" style="left:886.9px;top:14.7px;font-size:13.8px;font-weight:700;color:#d1d4dc;letter-spacing:-0.1px">ETH/USD</div><div class="t" style="left:956.7px;top:14.7px;font-size:13.8px;font-weight:400;color:#d1d4dc;letter-spacing:0.62px">3,588.1</div><div class="t" style="left:1016.5px;top:14.7px;font-size:13.8px;font-weight:400;color:#22ab94;letter-spacing:0.06px">+22.00 (+0.62%)</div><div class="t" style="left:1140.5px;top:14.7px;font-size:13.8px;font-weight:700;color:#d1d4dc;letter-spacing:-0.47px">EUR/USD</div><div class="t" style="left:1209.8px;top:14.7px;font-size:13.8px;font-weight:400;color:#f23645;letter-spacing:0.12px">1.15510</div><div class="t" style="left:1271.8px;top:14.7px;font-size:13.8px;font-weight:400;color:#f23645;letter-spacing:0.04px">&minus;0.00 (&minus;0.02%)</div><div class="t" style="left:1410.5px;top:14.7px;font-size:13.8px;font-weight:700;color:#d1d4dc;letter-spacing:-0.45px">BTC/USD</div><div class="t" style="left:1479.9px;top:14.7px;font-size:13.8px;font-weight:400;color:#d1d4dc;letter-spacing:0.17px">106,194</div><div class="t" style="left:1540.6px;top:14.7px;font-size:13.8px;font-weight:400;color:#22ab94;letter-spacing:0.07px">+222.00 (+0.21%)</div><div class="abs" style="left:106.1px;top:10px;width:1px;height:20px;background:#3a3a3a"></div><div class="abs" style="left:359.0px;top:10px;width:1px;height:20px;background:#3a3a3a"></div><div class="abs" style="left:629.2px;top:10px;width:1px;height:20px;background:#3a3a3a"></div><div class="abs" style="left:871.5px;top:10px;width:1px;height:20px;background:#3a3a3a"></div><div class="abs" style="left:1124.3px;top:10px;width:1px;height:20px;background:#3a3a3a"></div><div class="abs" style="left:1394.4px;top:10px;width:1px;height:20px;background:#3a3a3a"></div></div>
</div>
</body></html>
